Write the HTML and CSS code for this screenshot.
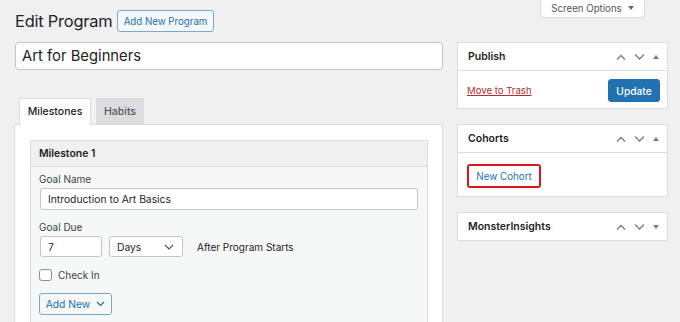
FILE: index.html
```html
<!DOCTYPE html>
<html>
<head>
<meta charset="utf-8">
<link rel="stylesheet" href="styles.css">
</head>
<body>
<div class="screen-options">Screen Options <span class="tri-down"></span></div>
<div class="wrap">
  <div class="page-head">
    <h1 class="page-title">Edit Program</h1>
    <button class="btn-outline btn-head">Add New Program</button>
  </div>
  <div class="columns">
    <div class="main-col">
      <div class="title-input">Art for Beginners</div>
      <div class="tabs">
        <div class="tab tab-active">Milestones</div>
        <div class="tab">Habits</div>
      </div>
      <div class="tab-panel">
        <div class="milestone">
          <div class="milestone-head">Milestone 1</div>
          <div class="milestone-body">
            <div class="label">Goal Name</div>
            <div class="field field-wide">Introduction to Art Basics</div>
            <div class="label label-due">Goal Due</div>
            <div class="due-row">
              <div class="field field-num">7</div>
              <div class="field field-select">Days
                <svg class="sel-chev" width="10" height="6" viewBox="0 0 10 6"><path d="M1 1l4 4 4-4" fill="none" stroke="#50575e" stroke-width="1.2"/></svg>
              </div>
              <div class="after">After Program Starts</div>
            </div>
            <div class="check-row"><span class="checkbox"></span><span>Check In</span></div>
            <button class="btn-outline btn-add">Add New
              <svg width="9" height="6" viewBox="0 0 9 6"><path d="M1 1l3.5 3.5L8 1" fill="none" stroke="#2271b1" stroke-width="1.2"/></svg>
            </button>
          </div>
        </div>
      </div>
    </div>
    <div class="side-col">
      <div class="postbox">
        <div class="postbox-head"><span>Publish</span>
          <span class="handles">
            <svg width="10" height="6" viewBox="0 0 10 6"><path d="M1 5.5L5 1.5l4 4" fill="none" stroke="#787c82" stroke-width="1.3"/></svg>
            <svg width="11" height="6" viewBox="0 0 11 6"><path d="M1 .5l4.5 4.5L10 .5" fill="none" stroke="#787c82" stroke-width="1.3"/></svg>
            <span class="tri-up"></span>
          </span>
        </div>
        <div class="publish-body">
          <a class="trash">Move to Trash</a>
          <button class="btn-primary">Update</button>
        </div>
      </div>
      <div class="postbox">
        <div class="postbox-head"><span>Cohorts</span>
          <span class="handles">
            <svg width="10" height="6" viewBox="0 0 10 6"><path d="M1 5.5L5 1.5l4 4" fill="none" stroke="#787c82" stroke-width="1.3"/></svg>
            <svg width="11" height="6" viewBox="0 0 11 6"><path d="M1 .5l4.5 4.5L10 .5" fill="none" stroke="#787c82" stroke-width="1.3"/></svg>
            <span class="tri-up"></span>
          </span>
        </div>
        <div class="cohort-body">
          <button class="btn-outline btn-cohort">New Cohort</button>
        </div>
      </div>
      <div class="postbox">
        <div class="postbox-head postbox-head-only"><span>MonsterInsights</span>
          <span class="handles">
            <svg width="10" height="6" viewBox="0 0 10 6"><path d="M1 5.5L5 1.5l4 4" fill="none" stroke="#787c82" stroke-width="1.3"/></svg>
            <svg width="11" height="6" viewBox="0 0 11 6"><path d="M1 .5l4.5 4.5L10 .5" fill="none" stroke="#787c82" stroke-width="1.3"/></svg>
            <span class="tri-down tri-small"></span>
          </span>
        </div>
      </div>
    </div>
  </div>
</div>
</body>
</html>
```
FILE: styles.css
```css
* { box-sizing: border-box; }
html, body { margin: 0; padding: 0; }
body {
  background: #f0f0f1;
  font-family: Inter, "Noto Sans", sans-serif;
  color: #1d2327;
  font-size: 10px;
  width: 680px;
  height: 322px;
  overflow: hidden;
  position: relative;
}
button { font-family: inherit; cursor: pointer; white-space: nowrap; }

.screen-options {
  position: absolute;
  top: 0;
  left: 540px;
  width: 105px;
  height: 18px;
  background: #fff;
  border: 1px solid #dcdcde;
  border-top: none;
  border-radius: 0 0 4px 4px;
  color: #50575e;
  font-size: 9.7px;
  display: flex;
  align-items: center;
  justify-content: center;
  gap: 6px;
  padding-bottom: 1px;
}
.tri-down {
  width: 0; height: 0;
  border-left: 3px solid transparent;
  border-right: 3px solid transparent;
  border-top: 4px solid #646970;
}
.tri-up {
  width: 0; height: 0;
  border-left: 3px solid transparent;
  border-right: 3px solid transparent;
  border-bottom: 4px solid #787c82;
}
.tri-small { border-top-color: #787c82; }

.wrap { padding: 10px 12px 0 15px; }

.page-head { display: flex; align-items: center; gap: 8px; height: 22px; }
.page-title {
  margin: 0;
  font-size: 16.4px;
  font-weight: 400;
  letter-spacing: -0.2px;
  line-height: 22px;
  width: 94px;
  white-space: nowrap;
}
.btn-outline {
  background: #f6f7f7;
  border: 1px solid #2271b1;
  border-radius: 3px;
  color: #2271b1;
  font-size: 10px;
  padding: 0 8px;
  height: 22px;
  display: inline-flex;
  align-items: center;
  gap: 6px;
}
.btn-head { border-color: #7ca7d0; width: 97px; justify-content: center; padding: 0; font-size: 9.7px; }

.columns {
  display: grid;
  grid-template-columns: 428px 211px;
  gap: 14px;
  margin-top: 10px;
  align-items: start;
}

.title-input {
  height: 28px;
  background: #fff;
  border: 1px solid #c3c4c7;
  border-radius: 4px;
  font-size: 14.8px;
  padding: 0 6px;
  display: flex;
  align-items: center;
}

.tabs { display: flex; gap: 5px; margin-top: 28px; padding-left: 4px; }
.tab {
  height: 26px;
  width: 48px;
  background: #dcdcde;
  border: 1px solid #dcdcde;
  border-bottom: none;
  display: flex;
  align-items: center;
  justify-content: center;
  font-size: 10.5px;
  font-weight: 500;
  color: #50575e;
}
.tab-active {
  width: 72px;
  background: #fff;
  color: #1d2327;
  position: relative;
  margin-bottom: -1px;
  height: 27px;
  padding-bottom: 1px;
}

.tab-panel {
  margin-left: -1px;
  background: #fff;
  border: 1px solid #dcdcde;
  padding: 15px 14px 0 15px;
}
.milestone { border: 1px solid #dcdcde; }
.milestone-head {
  height: 26px;
  background: #f0f0f1;
  border-bottom: 1px solid #dcdcde;
  font-size: 10.4px;
  font-weight: 600;
  display: flex;
  align-items: center;
  padding-left: 8px;
}
.milestone-body {
  background: #f6f7f7;
  padding: 6px 9px 8px 8px;
}
.label { color: #3c434a; font-size: 10px; line-height: 13px; }
.label-due { margin-top: 11px; }
.field {
  background: #fff;
  border: 1px solid #c3c4c7;
  border-radius: 3px;
  font-size: 10.3px;
  display: flex;
  align-items: center;
  padding: 0 7px;
}
.field-wide { height: 22px; margin-top: 2px; margin-left: 1px; }
.due-row { display: flex; align-items: center; margin-top: 2px; margin-left: 1px; }
.field-num { width: 62px; height: 21px; }
.field-select { width: 74px; height: 21px; margin-left: 7px; justify-content: space-between; padding-right: 8px; }
.after { margin-left: 14px; white-space: nowrap; font-size: 10px; }
.check-row { display: flex; align-items: center; gap: 6px; margin-top: 12px; color: #3c434a; font-size: 10px; }
.checkbox {
  width: 13px; height: 12px;
  background: #fff;
  border: 1px solid #8c8f94;
  border-radius: 3px;
}
.btn-add { margin-top: 12px; width: 73px; height: 22px; padding: 0; justify-content: center; font-size: 10.3px; border-color: #7ca7d0; }

.side-col { display: flex; flex-direction: column; }
.postbox { background: #fff; border: 1px solid #dcdcde; }
.postbox + .postbox { margin-top: 15px; }
.postbox-head {
  height: 28px;
  border-bottom: 1px solid #dcdcde;
  display: flex;
  align-items: center;
  justify-content: space-between;
  padding: 0 8px 0 10px;
  font-size: 10.5px;
  font-weight: 600;
}
.postbox-head-only { border-bottom: none; height: 27px; }
.handles { display: flex; align-items: center; gap: 8px; }
.publish-body {
  display: flex;
  justify-content: space-between;
  align-items: center;
  padding: 8px 7px 6px 9px;
}
.trash { color: #b32d2e; text-decoration: underline; font-size: 9.6px; }
.btn-primary {
  background: #2271b1;
  border: 1px solid #2271b1;
  border-radius: 3px;
  color: #fff;
  font-size: 10.2px;
  font-weight: 500;
  width: 52px;
  height: 23px;
  padding: 0;
}
.cohort-body { padding: 11px 9px 8px 9px; }
.btn-cohort {
  border: 2px solid #e0141e;
  border-radius: 3px;
  background: #fff;
  width: 74px;
  height: 24px;
  justify-content: center;
  padding: 0;
  font-size: 9.8px;
}
```
